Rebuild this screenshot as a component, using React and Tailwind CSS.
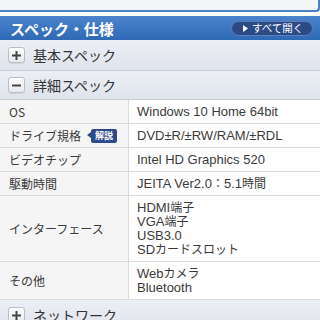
import React from "react";

const jp = { fontFamily: '"Noto Sans CJK JP", "Noto Sans", sans-serif' };
const val = { fontFamily: '"Liberation Sans", "Noto Sans CJK JP", sans-serif' };

function Mixed({ text }) {
  const parts = text.split(/([\u3000-\u30ff\u4e00-\u9fff\uff00-\uffef]+)/).filter(Boolean);
  return (
    <span className="block h-[14px] leading-[14px]">
      {parts.map((p, i) =>
        /[\u3000-\u30ff\u4e00-\u9fff\uff00-\uffef]/.test(p) ? (
          <span key={i} className="text-[12px] leading-none" style={jp}>
            {p}
          </span>
        ) : (
          <span key={i}>{p}</span>
        )
      )}
    </span>
  );
}

function PlusMinus({ minus }) {
  return (
    <span className="flex h-[16px] w-[17px] items-center justify-center rounded-[3px] border border-[#b9bec8] bg-gradient-to-b from-[#ffffff] to-[#e6e8ec] shadow-[0_1px_0_rgba(0,0,0,0.08)]">
      <svg width="9" height="9" viewBox="0 0 9 9">
        <rect x="0" y="3.5" width="9" height="2" fill="#444" />
        {!minus && <rect x="3.5" y="0" width="2" height="9" fill="#444" />}
      </svg>
    </span>
  );
}

function Section({ label, minus, h }) {
  return (
    <div className={`flex items-center gap-[8px] border-b border-[#c8cdd7] bg-gradient-to-b from-[#eceff5] to-[#dfe3eb] pl-[8px] ${h}`}>
      <PlusMinus minus={minus} />
      <span className="text-[14px] leading-none text-[#333]">{label}</span>
    </div>
  );
}

function Row({ label, values, badge }) {
  return (
    <div className="flex border-b border-[#dcdcdc]">
      <div className="flex w-[129px] shrink-0 items-center gap-[10px] border-r border-[#dcdcdc] bg-[#f5f5f5] pl-[9px] text-[12px] leading-[14px] text-[#3a3a3a]">
        <span>{label}</span>
        {badge && (
          <span className="relative flex h-[14px] items-center rounded-[2px] bg-[#2d4b88] px-[4px] text-[9px] font-bold leading-none text-white">
            <span className="absolute left-[-4px] top-[3.5px] h-0 w-0 border-y-[3.5px] border-r-[4px] border-y-transparent border-r-[#2d4b88]" />
            解説
          </span>
        )}
      </div>
      <div
        className="flex flex-col justify-center bg-white py-[4.5px] pl-[8px] text-[13px] leading-[14px] text-[#3a3a3a]"
        style={val}
      >
        {values.map((v) => (
          <Mixed key={v} text={v} />
        ))}
      </div>
    </div>
  );
}

export default function App() {
  return (
    <div className="h-[320px] w-[320px] overflow-hidden bg-white" style={jp}>
      <div className="h-[12px] rounded-br-[4px] border-b-2 border-r-2 border-[#4a7fc6] bg-[#f3f5f8]" />
      <div className="h-[4px] bg-white" />
      <div className="flex h-[24px] items-center justify-between bg-gradient-to-b from-[#4b84cc] to-[#2f69b6] pl-[10px] pr-[7px]">
        <span className="text-[15px] font-bold leading-none text-white">スペック・仕様</span>
        <span className="flex h-[15px] w-[82px] items-center gap-[4px] rounded-full border border-[#5d7fb8] bg-[#2c4a86] pl-[11px] text-[10.5px] leading-none text-white">
          <svg width="5" height="7" viewBox="0 0 5 7">
            <path d="M0 0 L5 3.5 L0 7 Z" fill="#fff" />
          </svg>
          すべて開く
        </span>
      </div>
      <Section label="基本スペック" h="h-[31px]" />
      <Section label="詳細スペック" minus h="h-[29px]" />
      <Row label="OS" values={["Windows 10 Home 64bit"]} />
      <Row label="ドライブ規格" badge values={["DVD±R/±RW/RAM/±RDL"]} />
      <Row label="ビデオチップ" values={["Intel HD Graphics 520"]} />
      <Row label="駆動時間" values={["JEITA Ver2.0：5.1時間"]} />
      <Row label="インターフェース" values={["HDMI端子", "VGA端子", "USB3.0", "SDカードスロット"]} />
      <Row label="その他" values={["Webカメラ", "Bluetooth"]} />
      <Section label="ネットワーク" h="h-[31px]" />
    </div>
  );
}
